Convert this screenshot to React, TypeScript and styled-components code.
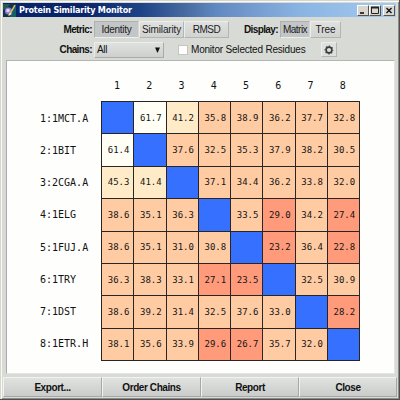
import React from 'react';
import styled, { createGlobalStyle } from 'styled-components';

const GlobalStyle = createGlobalStyle`
  * { box-sizing: border-box; }
  body { margin: 0; font-family: "Liberation Sans", Arial, sans-serif; font-size: 10px; color: #111; }
`;

const Window = styled.div`
  width: 400px;
  height: 400px;
  display: flex;
  flex-direction: column;
  padding: 3px 2px 1px 3px;
  background: #d7dad5;
  border: solid;
  border-width: 0 1px 1px 0;
  border-color: #505050;
  box-shadow: inset 1px 1px #d8d5cc, inset 2px 2px #faf9f4, inset -1px -1px #8c8c88;
  overflow: hidden;
`;

const TitleBar = styled.header`
  height: 14px;
  flex: none;
  display: flex;
  align-items: center;
  margin-right: 1px;
  padding-right: 1px;
  color: #fff;
  background: linear-gradient(90deg, #0a246a 0 20%, #1d4387 35%, #45699f 46%, #6088c0 54%, #7298cd 62%, #8ab5e3 76%, #a6caf0 100%);
`;

const Title = styled.h1`
  flex: 1;
  margin: 0 0 0 3px;
  font: bold 9px/14px "DejaVu Sans Condensed", "DejaVu Sans", sans-serif;
  letter-spacing: -0.22px;
  white-space: nowrap;
`;

const CaptionButton = styled.span<{ $gap?: boolean }>`
  width: 12px;
  height: 11px;
  margin-left: ${p => (p.$gap ? 2 : 0)}px;
  display: flex;
  background: #d9d6cf;
  border: 1px solid;
  border-color: #fff #55534f #55534f #fff;
`;

const Toolbar = styled.div`
  height: 43px;
  flex: none;
  display: flex;
  flex-direction: column;
  gap: 3px;
  padding-top: 4px;
`;

const Line = styled.div`
  height: 17px;
  display: flex;
  align-items: center;
  white-space: nowrap;
`;

const Caption = styled.span<{ $width: number }>`
  width: ${p => p.$width}px;
  padding-right: 2px;
  text-align: right;
  font-weight: bold;
  letter-spacing: -0.6px;
`;

const Toggle = styled.button<{ $width: number; $active?: boolean; $spacing?: number }>`
  width: ${p => p.$width}px;
  height: 17px;
  padding: 0;
  font: inherit;
  color: #1c1a24;
  letter-spacing: ${p => p.$spacing ?? 0}px;
  background: ${p => (p.$active ? '#c3c6c6' : 'linear-gradient(#dfe1de, #d0d3d0)')};
  border: 1px solid;
  border-color: ${p => (p.$active ? '#aeb1b1 #d4d6d4 #eceeec #aeb1b1' : '#eceeec #b2b5b3 #b2b5b3 #eceeec')};
`;

const Select = styled.div`
  width: 70px;
  height: 16px;
  display: flex;
  align-items: center;
  justify-content: space-between;
  padding: 0 3px 0 2px;
  letter-spacing: -0.3px;
  background: linear-gradient(#dfe1de, #cdd0cd);
  border: 1px solid;
  border-color: #eceeec #a8abaa #a8abaa #eceeec;
`;

const Checkbox = styled.span`
  width: 10px;
  height: 10px;
  margin: 0 3px 0 14px;
  background: #fefefe;
  border: 1px solid #c2c5c2;
`;

const CheckText = styled.span`
  width: 115px;
  letter-spacing: -0.2px;
`;

const GearButton = styled.span`
  width: 16px;
  height: 15px;
  margin-left: 15px;
  display: flex;
  align-items: center;
  justify-content: center;
  background: #dee0de;
  border: 1px solid;
  border-color: #eceeec #b2b5b3 #b2b5b3 #eceeec;
`;

const Panel = styled.main`
  flex: none;
  width: 389px;
  height: 314px;
  margin-left: 3px;
  padding: 15px 0 0 33px;
  background: #fefefd;
  border: 1px solid;
  border-color: #b3b6b3 #e3e5e3 #e3e5e3 #a9acaa;
  font-family: "DejaVu Sans Mono", monospace;
`;

const Headings = styled.div`
  height: 25px;
  width: 258px;
  margin-left: 61px;
  display: grid;
  grid-template-columns: repeat(8, 1fr);
  line-height: 20px;
  text-align: center;
`;

const Body = styled.div`
  display: grid;
  grid-template-columns: 61px 259px;
`;

const Labels = styled.div`
  height: 259px;
  display: grid;
  grid-template-rows: repeat(8, 1fr);
  align-items: center;
  padding-top: 1px;
  white-space: pre;
`;

const Matrix = styled.div`
  width: 259px;
  height: 260px;
  display: grid;
  grid-template: repeat(8, 1fr) / repeat(8, 1fr);
  gap: 1px;
  padding: 1px;
  background: #292522;
`;

const shade = (v: number | null) =>
  v === null ? '#3670ff' : v < 30 ? '#ff9b7b' : v < 40 ? '#ffcba3' : v < 50 ? '#ffebc8' : '#fffff5';

const Cell = styled.div<{ $value: number | null }>`
  display: flex;
  align-items: center;
  justify-content: center;
  padding: 0 0 0 2px;
  font-size: 9px;
  color: #151515;
  background: ${p => shade(p.$value)};
`;

const Actions = styled.footer`
  height: 20px;
  flex: none;
  margin-top: 3px;
  display: grid;
  grid-template-columns: 99px 99px 98px 98px;
`;

const Action = styled.button`
  padding: 0;
  font: bold 10px "Liberation Sans", Arial, sans-serif;
  letter-spacing: -0.42px;
  color: #111;
  background: linear-gradient(#e0e2df, #c9ccca);
  border: 1px solid;
  border-color: #f1f3f1 #a5a8a6 #a5a8a6 #f1f3f1;
`;

const names = ['1:1MCT.A', '2:1BIT', '3:2CGA.A', '4:1ELG', '5:1FUJ.A', '6:1TRY', '7:1DST', '8:1ETR.H'];

const values: (number | null)[][] = [
  [null, 61.7, 41.2, 35.8, 38.9, 36.2, 37.7, 32.8],
  [61.4, null, 37.6, 32.5, 35.3, 37.9, 38.2, 30.5],
  [45.3, 41.4, null, 37.1, 34.4, 36.2, 33.8, 32.0],
  [38.6, 35.1, 36.3, null, 33.5, 29.0, 34.2, 27.4],
  [38.6, 35.1, 31.0, 30.8, null, 23.2, 36.4, 22.8],
  [36.3, 38.3, 33.1, 27.1, 23.5, null, 32.5, 30.9],
  [38.6, 39.2, 31.4, 32.5, 37.6, 33.0, null, 28.2],
  [38.1, 35.6, 33.9, 29.6, 26.7, 35.7, 32.0, null],
];

const AppIcon = () => (
  <svg width="13" height="13" viewBox="0 0 13 13">
    <rect width="13" height="13" fill="#16324a" />
    <path d="M0 0h7L4 4 0 6z" fill="#245c55" />
    <path d="M8 6l5-5v12H7z" fill="#12606a" />
    <circle cx="5.5" cy="7" r="3.6" fill="#8a7ed0" />
    <circle cx="5" cy="6.5" r="1.8" fill="#ddd5fa" />
    <path d="M12 1L8 8l-2 3" stroke="#e9b85c" strokeWidth="1.5" fill="none" />
    <path d="M7 9l-2 3 4-2z" fill="#fff0c8" />
  </svg>
);

const GearIcon = () => (
  <svg width="10" height="10" viewBox="0 0 10 10" fill="none" stroke="#3a3d3c">
    <circle cx="5" cy="5" r="2.9" strokeWidth="1.6" />
    <circle cx="5" cy="5" r="3.9" strokeWidth="1.1" strokeDasharray="1.4 1.663" strokeDashoffset="0.7" />
  </svg>
);

export default function App() {
  return (
    <>
      <GlobalStyle />
      <Window>
        <TitleBar>
          <AppIcon />
          <Title>Protein Similarity Monitor</Title>
          <CaptionButton>
            <svg width="10" height="9"><path d="M2 7h4" stroke="#111" strokeWidth="1.6" /></svg>
          </CaptionButton>
          <CaptionButton>
            <svg width="10" height="9"><path d="M1.500 1v6.500h7V1" stroke="#222" fill="none" /><path d="M1 1.500h8" stroke="#222" strokeWidth="2" /></svg>
          </CaptionButton>
          <CaptionButton $gap>
            <svg width="10" height="9"><path d="M2.500 2l5 5m0-5l-5 5" stroke="#111" strokeWidth="1.4" /></svg>
          </CaptionButton>
        </TitleBar>
        <Toolbar>
          <Line>
            <Caption $width={91}>Metric:</Caption>
            <Toggle $width={45} $active $spacing={-0.25}>Identity</Toggle>
            <Toggle $width={45} $spacing={-0.15}>Similarity</Toggle>
            <Toggle $width={45} $spacing={-0.5}>RMSD</Toggle>
            <Caption $width={51}>Display:</Caption>
            <Toggle $width={30} $active $spacing={-0.5}>Matrix</Toggle>
            <Toggle $width={31}>Tree</Toggle>
          </Line>
          <Line>
            <Caption $width={91}>Chains:</Caption>
            <Select>
              All
              <svg width="5" height="6"><path d="M0 .5h5L2.500 6z" fill="#111" /></svg>
            </Select>
            <Checkbox />
            <CheckText>Monitor Selected Residues</CheckText>
            <GearButton><GearIcon /></GearButton>
          </Line>
        </Toolbar>
        <Panel>
          <Headings>{names.map((_, i) => <span key={i}>{i + 1}</span>)}</Headings>
          <Body>
            <Labels>{names.map(n => <span key={n}>{n}</span>)}</Labels>
            <Matrix>
              {values.flatMap((row, r) =>
                row.map((v, c) => <Cell key={`${r}-${c}`} $value={v}>{v === null ? '' : v.toFixed(1)}</Cell>)
              )}
            </Matrix>
          </Body>
        </Panel>
        <Actions>
          <Action>Export...</Action>
          <Action>Order Chains</Action>
          <Action>Report</Action>
          <Action>Close</Action>
        </Actions>
      </Window>
    </>
  );
}
